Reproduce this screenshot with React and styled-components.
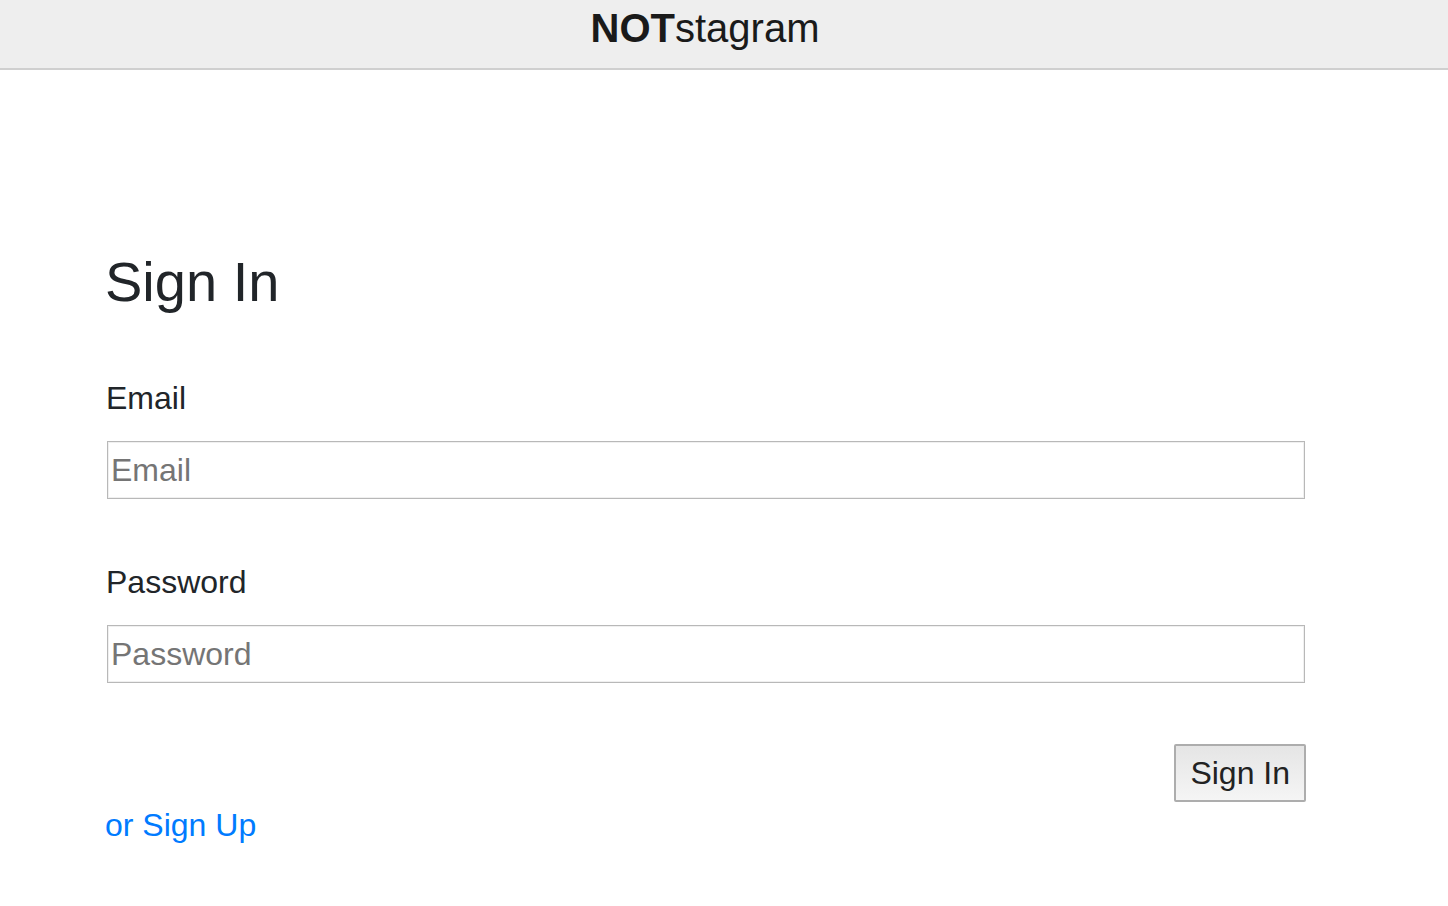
import React from "react";
import styled, { createGlobalStyle } from "styled-components";

const GlobalStyle = createGlobalStyle`
  body {
    margin: 0;
    background: #fff;
    font-family: "Liberation Sans", Arial, Helvetica, sans-serif;
    color: #212529;
  }
`;

const App = () => {
  return (
    <>
      <GlobalStyle />
      <Header>
        <Brand>
          <b>NOT</b>stagram
        </Brand>
      </Header>
      <Container>
        <Title>Sign In</Title>
        <form onSubmit={(e) => e.preventDefault()}>
          <Field>
            <Label htmlFor="email">Email</Label>
            <Input id="email" type="email" placeholder="Email" />
          </Field>
          <Field>
            <Label htmlFor="password">Password</Label>
            <Input id="password" type="password" placeholder="Password" />
          </Field>
          <Actions>
            <Button type="submit">Sign In</Button>
          </Actions>
        </form>
        <SignUpLink href="#">or Sign Up</SignUpLink>
      </Container>
    </>
  );
};

export default App;

const Header = styled.header`
  box-sizing: border-box;
  height: 70px;
  background: #eeeeee;
  border-bottom: 2px solid #cfcfcf;
  display: flex;
  justify-content: center;
  align-items: flex-start;
  padding: 4px 38px 0 0;
`;

const Brand = styled.div`
  font-size: 40px;
  line-height: 48px;
  color: #1a1a1a;
  b {
    font-weight: 700;
  }
`;

const Container = styled.main`
  margin-left: 104px;
  width: 1202px;
  padding-top: 178px;
`;

const Title = styled.h1`
  margin: 0 0 59px 1px;
  font-size: 56px;
  font-weight: 400;
  line-height: 1.2;
  color: #212529;
`;

const Field = styled.div`
  display: flex;
  flex-direction: column;
  & + & {
    margin-top: 59px;
  }
`;

const Label = styled.label`
  font-size: 32px;
  line-height: 48px;
  color: #212529;
  margin: 0 0 19px 2px;
`;

const Input = styled.input`
  box-sizing: border-box;
  width: calc(100% - 4px);
  height: 58px;
  margin: 0 1px 0 3px;
  padding: 1px 3px;
  font-family: "Liberation Sans", Arial, sans-serif;
  font-size: 32px;
  color: #212529;
  border: 1px solid #b8b8b8;
  box-shadow: inset 0 0 0 1px #f0f0f0;
  outline: none;
  &::placeholder {
    color: #757575;
  }
`;

const Actions = styled.div`
  display: flex;
  justify-content: flex-end;
  margin-top: 61px;
`;

const Button = styled.button`
  box-sizing: border-box;
  height: 58px;
  padding: 0 14px;
  font-family: "Liberation Sans", Arial, sans-serif;
  font-size: 32px;
  color: #222;
  border: 2px solid #adadad;
  border-radius: 2px;
  background: linear-gradient(#e5e5e5, #f5f5f5);
  cursor: pointer;
`;

const SignUpLink = styled.a`
  display: inline-block;
  margin: 4px 0 0 1px;
  font-size: 32px;
  line-height: 1.2;
  color: #007bff;
  text-decoration: none;
`;
